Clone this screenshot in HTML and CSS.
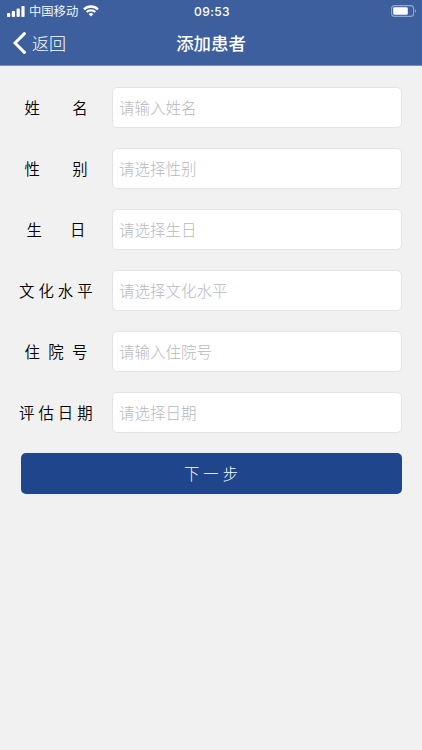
FILE: index.html
```
<!DOCTYPE html>
<html lang="zh-CN">
<head>
    <meta charset="UTF-8">
    <meta name="viewport" content="width=device-width, initial-scale=1.0">
    <title>添加患者</title>
    <link rel="stylesheet" href="styles.css">
</head>
<body>
    <header class="header">
        <div class="status-bar">
            <div class="carrier">
                <svg class="signal" width="18" height="11" viewBox="0 0 18 11" fill="#fff">
                    <rect x="0" y="7" width="3.2" height="4" rx="0.8"/>
                    <rect x="4.8" y="5" width="3.2" height="6" rx="0.8"/>
                    <rect x="9.6" y="2.6" width="3.2" height="8.4" rx="0.8"/>
                    <rect x="14.4" y="0" width="3.2" height="11" rx="0.8"/>
                </svg>
                <span class="carrier-name">中国移动</span>
                <svg class="wifi" width="16" height="12" viewBox="0 0 16 12" fill="none" stroke="#fff">
                    <path d="M1 4.3a10 10 0 0 1 14 0" stroke-width="2.4"/>
                    <path d="M3.7 7.1a6.1 6.1 0 0 1 8.6 0" stroke-width="2.1"/>
                    <path d="M8 11.4L5.6 9.1a3.4 3.4 0 0 1 4.8 0z" fill="#fff" stroke="none"/>
                </svg>
            </div>
            <span class="time">09:53</span>
            <svg class="battery" width="26" height="12" viewBox="0 0 26 12">
                <rect x="0.6" y="0.6" width="22" height="10.8" rx="3" fill="none" stroke="#93a6cb" stroke-width="1.1"/>
                <rect x="2.2" y="2.2" width="14.6" height="7.6" rx="1.4" fill="#fff"/>
                <path d="M24 4.2v3.6c1.4-.6 1.4-3 0-3.6z" fill="#93a6cb"/>
            </svg>
        </div>
        <div class="nav-bar">
            <a class="back" href="#">
                <svg width="13" height="22" viewBox="0 0 13 22" fill="none" stroke="#fff" stroke-width="3" stroke-linecap="round">
                    <path d="M11.4 1.6L2 11L11.4 20.4"/>
                </svg>
                <span>返回</span>
            </a>
            <h1 class="title">添加患者</h1>
        </div>
    </header>
    <form class="form">
        <div class="row">
            <label class="label wide" for="name">姓名</label>
            <input class="field" id="name" type="text" placeholder="请输入姓名">
        </div>
        <div class="row">
            <label class="label wide" for="sex">性别</label>
            <input class="field" id="sex" type="text" placeholder="请选择性别" readonly>
        </div>
        <div class="row">
            <label class="label birthday" for="birthday">生日</label>
            <input class="field" id="birthday" type="text" placeholder="请选择生日" readonly>
        </div>
        <div class="row">
            <label class="label" for="education">文化水平</label>
            <input class="field" id="education" type="text" placeholder="请选择文化水平" readonly>
        </div>
        <div class="row">
            <label class="label three" for="number">住院号</label>
            <input class="field" id="number" type="text" placeholder="请输入住院号">
        </div>
        <div class="row">
            <label class="label" for="date">评估日期</label>
            <input class="field" id="date" type="text" placeholder="请选择日期" readonly>
        </div>
        <button class="next" type="button">下一步</button>
    </form>
</body>
</html>
```
FILE: styles.css
```
* {
    box-sizing: border-box;
}
body {
    margin: 0;
    min-height: 750px;
    background-color: #f1f1f1;
    color: #000;
    font-family: "Noto Sans CJK SC", sans-serif;
}
.header {
    height: 66px;
    background-color: #3e5f9e;
    border-bottom: 1px solid #7b8fb9;
    color: #fff;
}
.status-bar,
.nav-bar {
    display: grid;
    grid-template-columns: 1fr auto 1fr;
    align-items: center;
}
.status-bar {
    height: 21px;
    padding: 0 5px 0 7px;
}
.carrier {
    display: flex;
    align-items: center;
}
.carrier-name {
    margin: 0 5px 0 4px;
    padding-top: 1px;
    font-size: 12.3px;
    font-weight: 350;
    line-height: 21px;
}
.time {
    font-family: Inter, sans-serif;
    font-size: 12px;
    font-weight: 500;
    line-height: 21px;
    letter-spacing: 0.4px;
}
.battery {
    justify-self: end;
}
.nav-bar {
    height: 43px;
    padding: 0 13px;
}
.back {
    display: flex;
    align-items: center;
    gap: 6px;
    color: #fff;
    font-size: 17px;
    line-height: 24px;
    font-weight: 300;
    text-decoration: none;
}
.title {
    margin: 0;
    font-size: 17.4px;
    line-height: 24px;
    font-weight: 500;
}
.form {
    display: flex;
    flex-direction: column;
    gap: 20px;
    padding: 21px 20.5px 0 19px;
}
.row {
    display: flex;
    align-items: center;
    height: 41px;
}
.label {
    width: 93px;
    padding-bottom: 2px;
    font-size: 15.4px;
    font-weight: 350;
    letter-spacing: 4px;
    white-space: nowrap;
}
.label.wide {
    padding-left: 5.5px;
    letter-spacing: 32.4px;
}
.label.birthday {
    padding-left: 7.5px;
    letter-spacing: 28.2px;
}
.label.three {
    padding-left: 5.5px;
    letter-spacing: 8.4px;
}
.field {
    flex: 1;
    min-width: 0;
    height: 41px;
    padding: 0 6px 2px;
    border: 1px solid #e4e4e4;
    border-radius: 5px;
    background-color: #fff;
    font-family: inherit;
    font-size: 15.5px;
    font-weight: 300;
    outline: none;
}
.field::placeholder {
    color: #b8b8bc;
}
.next {
    height: 41px;
    margin-left: 1.5px;
    padding: 0 0 2px 4px;
    border: none;
    border-radius: 5px;
    background-color: #1f458d;
    color: #fff;
    font-family: inherit;
    font-size: 15.4px;
    font-weight: 300;
    letter-spacing: 4px;
}
```
